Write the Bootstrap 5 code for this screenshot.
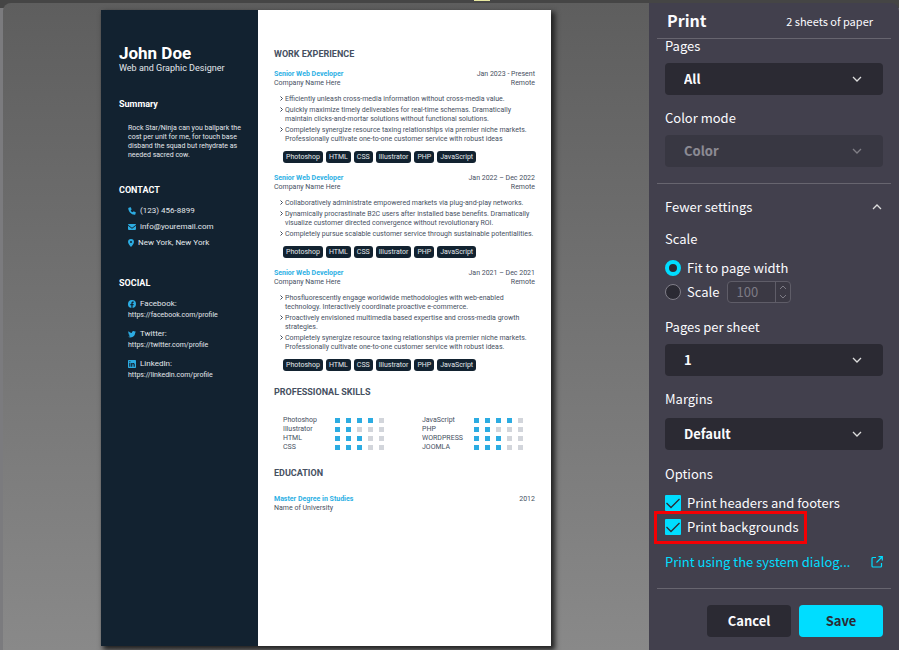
<!DOCTYPE html>
<html lang="en">
<head>
<meta charset="utf-8">
<meta name="viewport" content="width=device-width, initial-scale=1">
<title>Print</title>
<link href="https://cdn.jsdelivr.net/npm/bootstrap@5.3.0/dist/css/bootstrap.min.css" rel="stylesheet">
<style>
body { background: linear-gradient(#454545 0 8px, #7b7b7e 8px); padding: 3px 0 0 3px; }
body::before { content: ""; position: absolute; top: 0; left: 474px; width: 16px; height: 1px; background: #e8e8a0; }
.dialog { border-radius: 8px 8px 0 0; min-height: calc(100vh - 3px); overflow: hidden; }
.preview { background: linear-gradient(#5e5e5e, #898989); padding: 7px 16px 4px; min-width: 0; }
.sheet { font-family: Roboto, sans-serif; font-size: 7px; line-height: 9px; max-width: 450px; background: #fff; color: #465061; box-shadow: 3px 3px 5px 1px #222; }
.profile { background: #122230; color: #e3e8ec; width: 157px; padding: 33px 10px 0 18px; }
.profile h1 { font-size: 17px; line-height: 20px; font-weight: 700; color: #fff; margin: 0; }
.role { font-size: 9px; line-height: 10px; margin: 0 0 25px; }
.sheet h2 { font-size: 9px; line-height: 12px; font-weight: 700; margin: 0; }
.profile h2 { color: #fff; }
.blurb { margin: 14px 0 24px 9px; }
.contacts { font-size: 8px; line-height: 12px; margin: 9px 0 28px 9px; padding: 0; display: grid; gap: 4px; }
.socials { margin: 8px 0 0 9px; padding: 0; display: grid; gap: 7px; }
.socials b { font-weight: 400; font-size: 8px; line-height: 13px; }
.sheet a { color: inherit; text-decoration: none; display: block; line-height: 10px; }
.glyph { width: 8px; height: 8px; fill: #2cace2; flex: none; margin-right: 4px; }
.pin { width: 6px; }
.history { padding: 38px 16px 0; min-width: 0; }
.first { padding-bottom: 10px; }
.accent { color: #2cb0e4; font-weight: 700; }
.job { margin-bottom: 11px; }
.points { margin: 7px 0; padding: 0 0 0 11px; display: grid; gap: 2px; list-style: none; }
.points li { position: relative; }
.points svg { position: absolute; left: -5px; top: 1px; width: 3px; height: 5px; fill: none; stroke: #414b5d; }
.tags { margin-left: 9px; gap: 3px; }
.tag { background: #122230; color: #e3e8ec; border-radius: 3px; padding: 0 3px; line-height: 12px; }
.skills { display: grid; grid-template-columns: 139px 1fr; grid-template-rows: repeat(4, auto); grid-auto-flow: column; margin: 18px 0 15px 9px; }
.skill-name { width: 52px; }
.dots { gap: 6px; }
.dots i { width: 5px; height: 5px; background: #2cace2; }
.dots i.off { background: #d2d5db; }

.panel { width: 250px; flex: none; background: #42404d; color: #fbfbfe; font-family: "Noto Sans CJK SC", sans-serif; font-size: 13px; line-height: 20px; padding: 0 8px; }
.panel header { padding: 7px 18px 7px 10px; border-bottom: 1px solid #67656f; }
.panel h3 { font-size: 16px; line-height: 21px; font-weight: 700; margin: 0; }
.sheets { font-size: 11px; }
.section { padding: 0 8px; }
.scrolled { margin: -3px 0 3px; }
.panel .cap { display: block; margin: 0 0 7px; }
.panel .form-select { height: 32px; padding: 0 36px 0 19px; border: 0; border-radius: 4px; background-color: #2b2a33; color: #fbfbfe; font-size: 13px; font-weight: 700; line-height: 30px; margin-bottom: 13px;
  background-image: url("data:image/svg+xml,%3Csvg xmlns='http://www.w3.org/2000/svg' viewBox='0 0 10 10'%3E%3Cpath fill='none' stroke='%23ddd' stroke-width='1.3' d='M1 3l4 4 4-4'/%3E%3C/svg%3E"); background-size: 10px; background-position: right 21px center; }
.panel .form-select:disabled { opacity: .4; }
.panel .spaced { margin: 2px 0 14px; }
.rule { border-top: 1px solid #67656f; }
.more { background: none; border: 0; color: inherit; padding: 0; margin: 13px 0 12px; line-height: 20px; }
.more svg { width: 10px; height: 10px; margin-right: 1px; }
.line { fill: none; stroke: #ddd; stroke-width: 1.3; }
.choice { gap: 6px; height: 24px; }
.choice .form-check-input { width: 16px; height: 16px; margin: 0; flex: none; background-color: #2b2a33; border: 1px solid #807e88; }
.choice .form-check-input[type=radio]:checked { background-color: #2b2a33; background-image: none; border: 4px solid #00ddff; }
.choice .form-check-input[type=checkbox] { border-radius: 1px; }
.choice .form-check-input[type=checkbox]:checked { border: 0; background-color: #00ddff; background-size: 16px; background-image: url("data:image/svg+xml,%3Csvg xmlns='http://www.w3.org/2000/svg' viewBox='0 0 16 16'%3E%3Cpath fill='none' stroke='%232b2a33' stroke-width='1.3' d='M1.500 8l4.500 4.500 8.500-8.500'/%3E%3C/svg%3E"); }
.custom { margin-bottom: 13px; }
.percent { width: 64px; height: 22px; margin-left: 2px; border: 1px solid #5f5d68; border-radius: 4px; background: #3b3944; overflow: hidden; }
.percent input { width: 47px; border: 0; background: none; color: #7d7b85; padding: 0 0 0 8px; appearance: textfield; font-size: 13px; line-height: 20px; }
.percent input::-webkit-inner-spin-button { display: none; }
.percent svg { width: 15px; height: 20px; border-left: 1px solid #5f5d68; fill: none; stroke: #7d7b85; flex: none; }
.marked { position: relative; align-self: start; }
.marked::after { content: ""; position: absolute; inset: -4px -9px -5px -11px; border: 3px solid #f50003; pointer-events: none; }
.system { color: #00ddff; text-decoration: none; margin: 13px 0 16px; }
.system svg { width: 12px; height: 12px; fill: none; stroke: #00ddff; stroke-width: 1.2; }
.actions { gap: 8px; padding: 16px 8px 13px; }
.actions .btn { width: 84px; height: 32px; padding: 0; border: 0; border-radius: 4px; font-size: 13px; line-height: 30px; font-weight: 700; background: #2b2a33; color: #fbfbfe; }
.actions .btn.save { background: #00ddff; color: #2b2a33; }
</style>
<script src="https://cdn.jsdelivr.net/npm/bootstrap@5.3.0/dist/js/bootstrap.bundle.min.js"></script>
</head>
<body>
<div class="dialog d-flex">
  <main class="preview flex-grow-1 d-flex justify-content-center">
    <article class="sheet w-100 d-flex">
      <div class="profile flex-shrink-0">
        <h1>John Doe</h1>
        <p class="role">Web and Graphic Designer</p>
        <h2>Summary</h2>
        <p class="blurb">Rock Star/Ninja can you ballpark the<br>cost per unit for me, for touch base<br>disband the squad but rehydrate as<br>needed sacred cow.</p>
        <h2>CONTACT</h2>
        <ul class="contacts list-unstyled">
          <li class="d-flex align-items-center"><svg class="glyph" viewBox="0 0 16 16"><path d="M4.500.5 1.500 1.300C.7 1.500.4 2 .5 2.800 1.200 9.500 6.500 14.800 13.200 15.500c.8.1 1.300-.2 1.500-1l.8-3c.1-.6-.1-1-.7-1.300l-3.100-1.300c-.5-.2-.9-.1-1.300.3L9.200 10.700C7.500 9.800 6.200 8.500 5.300 6.800l1.500-1.200c.4-.4.5-.8.3-1.300L5.800 1.200C5.500.6 5.100.4 4.500.5z"/></svg>(123) 456-8899</li>
          <li class="d-flex align-items-center"><svg class="glyph" viewBox="0 0 16 16"><path d="M1.500 2h13A1.500 1.500 0 0 1 16 3.500L8 9.500 0 3.500A1.500 1.500 0 0 1 1.500 2zM0 5.500l8 6 8-6V12a2 2 0 0 1-2 2H2a2 2 0 0 1-2-2z"/></svg>info@youremail.com</li>
          <li class="d-flex align-items-center"><svg class="glyph pin" viewBox="2 0 12 16"><path fill-rule="evenodd" d="M8 0a6 6 0 0 0-6 6c0 3 4 8 6 10 2-2 6-7 6-10a6 6 0 0 0-6-6zm0 4a2 2 0 1 1 0 4 2 2 0 0 1 0-4z"/></svg>New York, New York</li>
        </ul>
        <h2>SOCIAL</h2>
        <ul class="socials list-unstyled">
          <li><b class="d-flex align-items-center"><svg class="glyph" viewBox="0 0 16 16"><path d="M16 8A8 8 0 1 0 6.700 15.900v-5.600h-2V8h2V6.200c0-2 1.200-3.100 3-3.100.9 0 1.800.2 1.800.2v2h-1c-1 0-1.300.6-1.300 1.200V8h2.200l-.3 2.300H9.200v5.600A8 8 0 0 0 16 8z"/></svg>Facebook:</b><a href="https://facebook.com/profile">https://facebook.com/profile</a></li>
          <li><b class="d-flex align-items-center"><svg class="glyph" viewBox="0 0 16 16"><path d="M5 15c6 0 9.300-5 9.300-9.300v-.4A6.600 6.600 0 0 0 16 3.500a6.500 6.500 0 0 1-1.900.5 3.300 3.300 0 0 0 1.400-1.800 6.500 6.500 0 0 1-2 .8A3.300 3.300 0 0 0 7.900 6 9.300 9.300 0 0 1 1.100 2.500a3.300 3.300 0 0 0 1 4.400 3.300 3.300 0 0 1-1.500-.4 3.300 3.300 0 0 0 2.700 3.300 3.300 3.300 0 0 1-1.500 0 3.300 3.300 0 0 0 3.100 2.300A6.600 6.600 0 0 1 0 13.500 9.300 9.300 0 0 0 5 15z"/></svg>Twitter:</b><a href="https://twitter.com/profile">https://twitter.com/profile</a></li>
          <li><b class="d-flex align-items-center"><svg class="glyph" viewBox="0 0 16 16"><path fill-rule="evenodd" d="M1.500 0h13A1.500 1.500 0 0 1 16 1.500v13a1.500 1.500 0 0 1-1.500 1.500h-13A1.500 1.500 0 0 1 0 14.500v-13A1.500 1.500 0 0 1 1.500 0zm1 6v7.500h2.300V6zm0-3.500v2.200h2.300V2.500zM6.300 6v7.500h2.300V9.500c0-2 2.600-2 2.600 0v4h2.300V9c0-3.500-3.600-4-4.900-2V6z"/></svg>LinkedIn:</b><a href="https://linkedin.com/profile">https://linkedin.com/profile</a></li>
        </ul>
      </div>
      <div class="history flex-grow-1">
        <h2 class="first">WORK EXPERIENCE</h2>
        <section class="job">
          <div class="d-flex justify-content-between"><span class="accent">Senior Web Developer</span><span>Jan 2023 - Present</span></div>
          <div class="d-flex justify-content-between"><span>Company Name Here</span><span>Remote</span></div>
          <ul class="points">
            <li><svg viewBox="0 0 3 5"><path d="M.5.5l2 2-2 2"/></svg>Efficiently unleash cross-media information without cross-media value.</li>
            <li><svg viewBox="0 0 3 5"><path d="M.5.5l2 2-2 2"/></svg>Quickly maximize timely deliverables for real-time schemas. Dramatically<br>maintain clicks-and-mortar solutions without functional solutions.</li>
            <li><svg viewBox="0 0 3 5"><path d="M.5.5l2 2-2 2"/></svg>Completely synergize resource taxing relationships via premier niche markets.<br>Professionally cultivate one-to-one customer service with robust ideas</li>
          </ul>
          <div class="tags d-flex"><span class="tag">Photoshop</span><span class="tag">HTML</span><span class="tag">CSS</span><span class="tag">Illustrator</span><span class="tag">PHP</span><span class="tag">JavaScript</span></div>
        </section>
        <section class="job">
          <div class="d-flex justify-content-between"><span class="accent">Senior Web Developer</span><span>Jan 2022 – Dec 2022</span></div>
          <div class="d-flex justify-content-between"><span>Company Name Here</span><span>Remote</span></div>
          <ul class="points">
            <li><svg viewBox="0 0 3 5"><path d="M.5.5l2 2-2 2"/></svg>Collaboratively administrate empowered markets via plug-and-play networks.</li>
            <li><svg viewBox="0 0 3 5"><path d="M.5.5l2 2-2 2"/></svg>Dynamically procrastinate B2C users after installed base benefits. Dramatically<br>visualize customer directed convergence without revolutionary ROI.</li>
            <li><svg viewBox="0 0 3 5"><path d="M.5.5l2 2-2 2"/></svg>Completely pursue scalable customer service through sustainable potentialities.</li>
          </ul>
          <div class="tags d-flex"><span class="tag">Photoshop</span><span class="tag">HTML</span><span class="tag">CSS</span><span class="tag">Illustrator</span><span class="tag">PHP</span><span class="tag">JavaScript</span></div>
        </section>
        <section class="job">
          <div class="d-flex justify-content-between"><span class="accent">Senior Web Developer</span><span>Jan 2021 – Dec 2021</span></div>
          <div class="d-flex justify-content-between"><span>Company Name Here</span><span>Remote</span></div>
          <ul class="points">
            <li><svg viewBox="0 0 3 5"><path d="M.5.5l2 2-2 2"/></svg>Phosfluorescently engage worldwide methodologies with web-enabled<br>technology. Interactively coordinate proactive e-commerce.</li>
            <li><svg viewBox="0 0 3 5"><path d="M.5.5l2 2-2 2"/></svg>Proactively envisioned multimedia based expertise and cross-media growth<br>strategies.</li>
            <li><svg viewBox="0 0 3 5"><path d="M.5.5l2 2-2 2"/></svg>Completely synergize resource taxing relationships via premier niche markets.<br>Professionally cultivate one-to-one customer service with robust ideas.</li>
          </ul>
          <div class="tags d-flex"><span class="tag">Photoshop</span><span class="tag">HTML</span><span class="tag">CSS</span><span class="tag">Illustrator</span><span class="tag">PHP</span><span class="tag">JavaScript</span></div>
        </section>
        <h2 class="pt-1">PROFESSIONAL SKILLS</h2>
        <div class="skills">
          <div class="d-flex align-items-center"><span class="skill-name">Photoshop</span><span class="dots d-flex"><i></i><i></i><i></i><i></i><i class="off"></i></span></div>
          <div class="d-flex align-items-center"><span class="skill-name">Illustrator</span><span class="dots d-flex"><i></i><i></i><i class="off"></i><i class="off"></i><i class="off"></i></span></div>
          <div class="d-flex align-items-center"><span class="skill-name">HTML</span><span class="dots d-flex"><i></i><i></i><i></i><i class="off"></i><i class="off"></i></span></div>
          <div class="d-flex align-items-center"><span class="skill-name">CSS</span><span class="dots d-flex"><i></i><i></i><i></i><i class="off"></i><i class="off"></i></span></div>
          <div class="d-flex align-items-center"><span class="skill-name">JavaScript</span><span class="dots d-flex"><i></i><i></i><i></i><i></i><i class="off"></i></span></div>
          <div class="d-flex align-items-center"><span class="skill-name">PHP</span><span class="dots d-flex"><i></i><i></i><i class="off"></i><i class="off"></i><i class="off"></i></span></div>
          <div class="d-flex align-items-center"><span class="skill-name">WORDPRESS</span><span class="dots d-flex"><i></i><i></i><i></i><i class="off"></i><i class="off"></i></span></div>
          <div class="d-flex align-items-center"><span class="skill-name">JOOMLA</span><span class="dots d-flex"><i></i><i></i><i></i><i class="off"></i><i class="off"></i></span></div>
        </div>
        <h2 class="mb-3">EDUCATION</h2>
        <div class="d-flex justify-content-between"><span class="accent">Master Degree in Studies</span><span>2012</span></div>
        <div>Name of University</div>
      </div>
    </article>
  </main>

  <form class="panel d-flex flex-column">
    <header class="d-flex justify-content-between align-items-center">
      <h3>Print</h3><span class="sheets">2 sheets of paper</span>
    </header>
    <div class="section scrolled">
      <label class="cap" for="pages">Pages</label>
      <select class="form-select" id="pages"><option>All</option></select>
      <label class="cap" for="color">Color mode</label>
      <select class="form-select" id="color" disabled><option>Color</option></select>
    </div>
    <div class="rule"></div>
    <div class="section d-flex flex-column">
      <button type="button" class="more d-flex justify-content-between align-items-center">Fewer settings<svg class="line" viewBox="0 0 10 10"><path d="M1 7l4-4 4 4"/></svg></button>
      <span class="cap">Scale</span>
      <label class="choice d-flex align-items-center"><input class="form-check-input" type="radio" name="scale" checked>Fit to page width</label>
      <div class="choice custom d-flex align-items-center">
        <input class="form-check-input" type="radio" name="scale" id="custom"><label for="custom">Scale</label>
        <span class="percent d-flex"><input type="number" value="100" aria-label="Scale percent" disabled><svg viewBox="0 0 14 20"><path d="M4 7l3-3 3 3M4 13l3 3 3-3"/></svg></span>
      </div>
      <label class="cap" for="per">Pages per sheet</label>
      <select class="form-select" id="per"><option>1</option></select>
      <label class="cap" for="margins">Margins</label>
      <select class="form-select spaced" id="margins"><option>Default</option></select>
      <span class="cap">Options</span>
      <label class="choice d-flex align-items-center"><input class="form-check-input" type="checkbox" checked>Print headers and footers</label>
      <label class="choice marked d-flex align-items-center"><input class="form-check-input" type="checkbox" checked>Print backgrounds</label>
      <a class="system d-flex justify-content-between align-items-center" href="#">Print using the system dialog...<svg viewBox="0 0 12 12"><path d="M5 1.500H2a1 1 0 0 0-1 1V10a1 1 0 0 0 1 1h7.500a1 1 0 0 0 1-1V7M7.500.7h3.800v3.800M11 1L5.500 6.500"/></svg></a>
    </div>
    <div class="rule"></div>
    <div class="actions d-flex justify-content-end">
      <button type="button" class="btn">Cancel</button>
      <button type="submit" class="btn save">Save</button>
    </div>
  </form>
</div>
</body>
</html>
